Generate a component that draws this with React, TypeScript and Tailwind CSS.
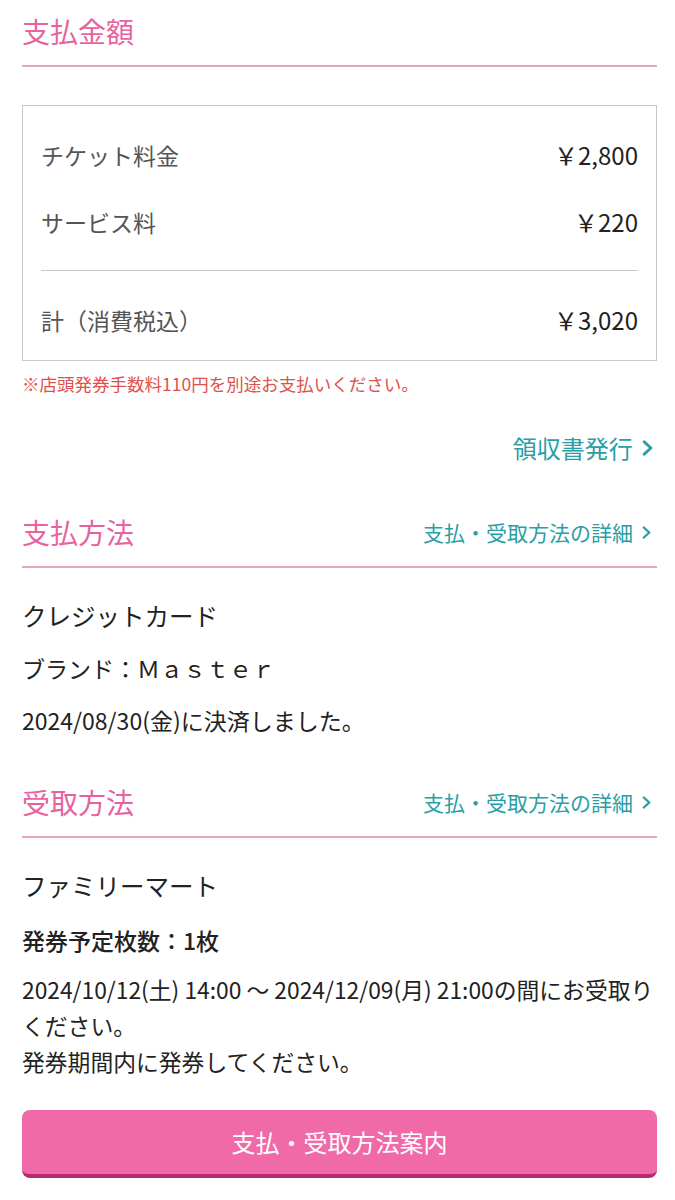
import React from "react";

const font = { fontFamily: '"Noto Sans CJK JP", "Noto Sans", sans-serif' };

function Chevron({ size = 14 }: { size?: number }) {
  return (
    <svg width={size * 0.7} height={size} viewBox="0 0 10 14" fill="none" className="ml-[9px]">
      <polyline points="2,1.5 8,7 2,12.5" stroke="#2a9ea6" strokeWidth="2.6" strokeLinecap="round" strokeLinejoin="round" />
    </svg>
  );
}

function SectionHeading({ title, link, className }: { title: string; link?: string; className?: string }) {
  return (
    <div className={`flex items-center justify-between border-b-2 border-[#e6a3c5] pb-[14px] ${className ?? ""}`}>
      <h2 className="text-[28px] leading-[40px] text-[#e6639f]">{title}</h2>
      {link && (
        <a className="flex items-center pr-[6px] text-[21px] leading-[28px] text-[#2a9ea6]">
          {link}
          <Chevron size={13} />
        </a>
      )}
    </div>
  );
}

const rows = [
  { label: "チケット料金", value: "￥2,800" },
  { label: "サービス料", value: "￥220" },
];

export default function App() {
  return (
    <div style={font} className="min-h-[1200px] w-[675px] bg-white pl-[22px] pr-[18px] pt-[11px] text-[#222]">
      <SectionHeading title="支払金額" />

      <div className="mt-[38px] border border-[#c8c8c8] px-[18px] pt-[33px] pb-[24px]">
        {rows.map((row, i) => (
          <div key={row.label} className={`flex items-center justify-between leading-[32px] ${i > 0 ? "mt-[35px]" : ""}`}>
            <span className="text-[23px] text-[#555]">{row.label}</span>
            <span className="text-[24px] text-[#222]">{row.value}</span>
          </div>
        ))}
        <div className="mt-[32px] border-t border-[#c8c8c8]" />
        <div className="mt-[33px] flex items-center justify-between leading-[32px]">
          <span className="text-[23px] text-[#555]">計（消費税込）</span>
          <span className="text-[24px] text-[#222]">￥3,020</span>
        </div>
      </div>

      <p className="mt-[11px] text-[17.5px] leading-[24px] text-[#e0504c]">
        ※店頭発券手数料110円を別途お支払いください。
      </p>

      <div className="mt-[36px] flex justify-end">
        <a className="flex items-center pr-[4px] text-[24px] leading-[32px] text-[#2a9ea6]">
          領収書発行
          <Chevron size={16} />
        </a>
      </div>

      <SectionHeading title="支払方法" link="支払・受取方法の詳細" className="mt-[48px]" />

      <div className="mt-[30px] text-[24.5px] leading-[36px]">クレジットカード</div>
      <div className="mt-[16px] text-[23px] leading-[36px]">ブランド：Ｍａｓｔｅｒ</div>
      <div className="mt-[16px] text-[23px] leading-[36px]">2024/08/30(金)に決済しました。</div>

      <SectionHeading title="受取方法" link="支払・受取方法の詳細" className="mt-[44px]" />

      <div className="mt-[30px] text-[24.5px] leading-[36px]">ファミリーマート</div>
      <div className="mt-[18px] text-[23px] font-medium leading-[36px]">発券予定枚数：1枚</div>
      <div className="mt-[14px] text-[22.8px] leading-[36px]">
        <p>
          2024/10/12(土) 14:00 〜 2024/12/09(月) 21:00の間にお受取り
          <br />
          ください。
        </p>
        <p>発券期間内に発券してください。</p>
      </div>

      <button className="mt-[30px] flex h-[68px] w-full items-center justify-center rounded-[8px] border-b-4 border-[#b92a6c] bg-[#f06aa8] text-[24px] text-white">
        支払・受取方法案内
      </button>
    </div>
  );
}
